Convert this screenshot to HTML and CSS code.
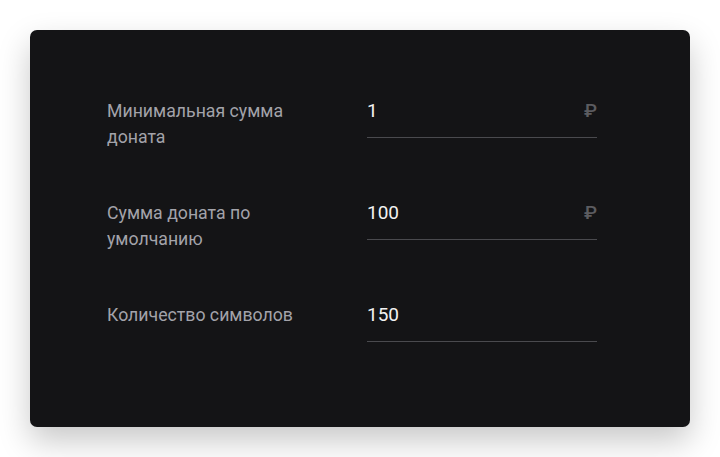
FILE: index.html
```html
<!DOCTYPE html>
<html lang="ru">
<head>
<meta charset="utf-8">
<link rel="stylesheet" href="styles.css">
</head>
<body>
<div class="card">
  <div class="row">
    <div class="label">Минимальная сумма доната</div>
    <div class="field">
      <span class="value">1</span>
      <span class="currency">₽</span>
    </div>
  </div>
  <div class="row">
    <div class="label">Сумма доната по умолчанию</div>
    <div class="field">
      <span class="value">100</span>
      <span class="currency">₽</span>
    </div>
  </div>
  <div class="row">
    <div class="label">Количество символов</div>
    <div class="field">
      <span class="value">150</span>
    </div>
  </div>
</div>
</body>
</html>
```
FILE: styles.css
```css
html, body {
  margin: 0;
  padding: 0;
  background: #ffffff;
}
body {
  font-family: Roboto, "Liberation Sans", sans-serif;
  padding: 30px 30px 30px 30px;
}
.card {
  width: 660px;
  height: 397px;
  box-sizing: border-box;
  background: #141416;
  border-radius: 7px;
  box-shadow: 0 14px 32px rgba(0, 0, 0, 0.22);
  padding: 68px 93px 0 77px;
  display: flex;
  flex-direction: column;
  gap: 50px;
}
.row {
  display: flex;
  align-items: flex-start;
  height: 52px;
}
.label {
  width: 220px;
  margin-right: 40px;
  font-size: 17.7px;
  line-height: 26px;
  color: #a3a3aa;
}
.field {
  width: 230px;
  height: 40px;
  box-sizing: border-box;
  border-bottom: 1px solid #4a4a4e;
  display: flex;
  justify-content: space-between;
  align-items: flex-start;
}
.value {
  font-size: 19px;
  line-height: 26px;
  color: #f2f2f2;
}
.currency {
  font-size: 19px;
  line-height: 26px;
  font-weight: 500;
  color: #5c5c60;
  margin-right: 0;
}
```
